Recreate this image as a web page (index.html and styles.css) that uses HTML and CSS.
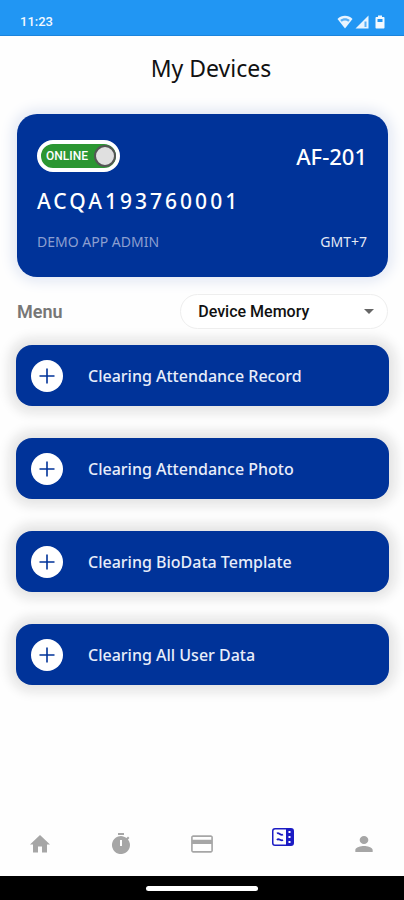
FILE: index.html
```html
<!DOCTYPE html>
<html lang="en">
<head>
<meta charset="utf-8">
<meta name="viewport" content="width=device-width, initial-scale=1">
<title>My Devices</title>
<link rel="stylesheet" href="styles.css">
</head>
<body>
<div class="status-bar">
  <span>11:23</span>
  <div class="status-icons">
    <svg width="16" height="14" viewBox="0 0 16 14" aria-hidden="true"><path d="M8 13.500L.5 4C4.500-.2 11.500-.2 15.500 4z" fill="#e8f4ff"/><path d="M3.200 5C6 2.500 10 2.500 12.800 5L11.300 6.800C9.400 5.200 6.600 5.200 4.700 6.800z" fill="#59b0f7"/></svg>
    <svg width="14" height="14" viewBox="0 0 14 14" aria-hidden="true"><path d="M.5 13.500L13.500.5v13z" fill="#e8f4ff"/><path d="M9.500 6.500h2V12h-2z" fill="#59b0f7"/></svg>
    <svg class="battery" width="10" height="14" viewBox="0 0 10 14" aria-hidden="true"><path d="M3 .5h4V2h1.500c.6 0 1 .4 1 1v9.500c0 .6-.4 1-1 1h-7c-.6 0-1-.4-1-1V3c0-.6.4-1 1-1H3z" fill="#f2f9ff"/><path d="M2.500 4h5v3h-5z" fill="#2196f3"/></svg>
  </div>
</div>
<header class="title-bar"><h1>My Devices</h1></header>
<main>
  <section class="device-card">
    <div class="card-row">
      <label class="switch"><span>ONLINE</span><input type="checkbox" role="switch" checked></label>
      <span class="model">AF-201</span>
    </div>
    <p class="serial">ACQA193760001</p>
    <div class="card-row card-meta">
      <span class="owner">DEMO APP ADMIN</span>
      <span class="zone">GMT+7</span>
    </div>
  </section>
  <div class="menu-row">
    <label for="menu">Menu</label>
    <div class="select-box">
      <select id="menu"><option>Device Memory</option></select>
      <svg class="caret" width="10" height="5" viewBox="0 0 10 5" aria-hidden="true"><path d="M0 0h10L5 5z" fill="#666"/></svg>
    </div>
  </div>
  <div class="actions">
    <button type="button" class="action"><svg width="32" height="32" viewBox="0 0 32 32" aria-hidden="true"><circle cx="16" cy="16" r="16" fill="#fff"/><path d="M16 8.500v15M8.500 16h15" stroke="#003399" stroke-width="1.600"/></svg>Clearing Attendance Record</button>
    <button type="button" class="action"><svg width="32" height="32" viewBox="0 0 32 32" aria-hidden="true"><circle cx="16" cy="16" r="16" fill="#fff"/><path d="M16 8.500v15M8.500 16h15" stroke="#003399" stroke-width="1.600"/></svg>Clearing Attendance Photo</button>
    <button type="button" class="action"><svg width="32" height="32" viewBox="0 0 32 32" aria-hidden="true"><circle cx="16" cy="16" r="16" fill="#fff"/><path d="M16 8.500v15M8.500 16h15" stroke="#003399" stroke-width="1.600"/></svg>Clearing BioData Template</button>
    <button type="button" class="action"><svg width="32" height="32" viewBox="0 0 32 32" aria-hidden="true"><circle cx="16" cy="16" r="16" fill="#fff"/><path d="M16 8.500v15M8.500 16h15" stroke="#003399" stroke-width="1.600"/></svg>Clearing All User Data</button>
  </div>
</main>
<nav class="tabs">
  <a href="#home" aria-label="Home"><svg width="24" height="24" viewBox="0 0 24 24"><path d="M10 20.500v-6h4v6h5v-8h3L12 3 2 12.500h3v8z"/></svg></a>
  <a href="#timer" aria-label="Timer"><svg width="24" height="24" viewBox="0 0 24 24"><path d="M15 1H9v2h6zM19 7.400l1.400-1.400c-.4-.5-.9-1-1.400-1.400L17.600 6A9 9 0 1 0 19 7.400zM13 14h-2V8h2z"/></svg></a>
  <a href="#cards" aria-label="Cards"><svg width="24" height="24" viewBox="1 1 22 22"><path d="M20 4H4c-1.100 0-2 .9-2 2v12c0 1.100.9 2 2 2h16c1.100 0 2-.9 2-2V6c0-1.100-.9-2-2-2zm.5 14.500h-17V12h17zm0-10.500h-17V5.500h17z"/></svg></a>
  <a href="#devices" class="active" aria-label="Devices" aria-current="page"><svg width="22" height="18" viewBox="0 0 22 18"><path fill-rule="evenodd" d="M3 0h16a3 3 0 0 1 3 3v12a3 3 0 0 1-3 3H3a3 3 0 0 1-3-3V3a3 3 0 0 1 3-3zM3 1.500A1.500 1.500 0 0 0 1.500 3v12A1.500 1.500 0 0 0 3 16.500h11v-15z"/><path d="M5 5.500C7 4 8.500 8 11 6.500M5 12c2-2.500 3.500 1.500 6 0" fill="none" stroke="currentColor" stroke-width="1.800"/><path d="M16.500 3h2v2h-2zM16.500 8h2v2h-2zM16.500 13h2v2h-2z" fill="#fff"/></svg></a>
  <a href="#profile" aria-label="Profile"><svg width="26" height="24" viewBox="0 0 24 24" preserveAspectRatio="none"><path d="M12 12a4 4 0 1 0 0-8 4 4 0 0 0 0 8zm0 2c-2.700 0-8 1.300-8 4v2h16v-2c0-2.700-5.300-4-8-4z"/></svg></a>
</nav>
<div class="home-bar"><div class="handle"></div></div>
</body>
</html>
```
FILE: styles.css
```css
* {
  box-sizing: border-box;
}

body {
  margin: 0;
  min-height: 100vh;
  display: flex;
  flex-direction: column;
  background: #fefefe;
  color: #111;
  font-family: "Noto Sans", "Open Sans", sans-serif;
}

.status-bar {
  height: 36px;
  padding: 8px 19px 0 20px;
  display: flex;
  align-items: center;
  justify-content: space-between;
  background: #2196f3;
  border-bottom: 1px solid #1b84dc;
  color: #f2f9ff;
  font: 500 13px/20px Roboto, sans-serif;
}

.status-icons {
  display: flex;
  gap: 2px;
}

.battery {
  margin-left: 4px;
}

.title-bar {
  padding: 16px 0 30px 18px;
  text-align: center;
}

h1 {
  margin: 0;
  font-size: 23px;
  line-height: 32px;
  font-weight: 400;
}

main {
  flex: 1;
  padding: 0 15px 0 16px;
}

.device-card {
  margin: 0 1px;
  padding: 26px 21px 23px 20px;
  border-radius: 20px;
  background: #003399;
  box-shadow: 0 0 14px 4px #e0e6f3;
  color: #fff;
}

.card-row {
  display: flex;
  align-items: center;
  justify-content: space-between;
}

.switch {
  width: 83px;
  height: 32px;
  padding-left: 5px;
  display: flex;
  align-items: center;
  justify-content: space-between;
  border: 4px solid #fff;
  border-radius: 16px;
  background: #2b9632;
  font: 500 12px/16px Roboto, sans-serif;
}

.switch input {
  appearance: none;
  width: 22px;
  height: 22px;
  margin: 0;
  border: 2px solid #555;
  border-radius: 50%;
  background: #e0e0e0;
}

.model {
  font-size: 22px;
  line-height: 32px;
  font-weight: 500;
}

.serial {
  margin: 13px 0;
  font-size: 21px;
  line-height: 32px;
  font-weight: 500;
  letter-spacing: 3px;
}

.card-meta {
  font-size: 14px;
  line-height: 24px;
}

.owner {
  color: #8c9fd0;
}

.zone {
  color: #e4e9f5;
}

.menu-row {
  margin: 17px 1px 16px;
  display: flex;
  align-items: center;
  justify-content: space-between;
  color: #777;
  font: 600 18px/24px Roboto, sans-serif;
}

.select-box {
  position: relative;
  width: 56%;
}

select {
  appearance: none;
  width: 100%;
  height: 35px;
  padding: 0 40px 0 17px;
  border: 1px solid #eee;
  border-radius: 18px;
  background: #fff;
  color: #111;
  font: 500 16px/24px Roboto, sans-serif;
}

.caret {
  position: absolute;
  right: 14px;
  top: 15px;
  pointer-events: none;
}

.actions {
  display: grid;
  gap: 32px;
}

.action {
  height: 61px;
  padding: 0 15px;
  display: flex;
  align-items: center;
  gap: 25px;
  border: 0;
  border-radius: 16px;
  background: #003399;
  box-shadow: 0 0 12px 7px #e4e4e4;
  color: #e8edfa;
  font: 500 16px/24px "Noto Sans", "Open Sans", sans-serif;
}

.tabs {
  height: 64px;
  display: grid;
  grid-template-columns: repeat(5, 1fr);
  align-items: center;
}

.tabs a {
  height: 24px;
  display: flex;
  justify-content: center;
  color: #a6a6a6;
}

.tabs .active {
  height: 32px;
  color: #1c1cc4;
}

.tabs svg {
  fill: currentColor;
}

.home-bar {
  height: 24px;
  display: flex;
  align-items: center;
  justify-content: center;
  background: #000;
}

.handle {
  width: 112px;
  height: 5px;
  border-radius: 3px;
  background: #fff;
}
```
